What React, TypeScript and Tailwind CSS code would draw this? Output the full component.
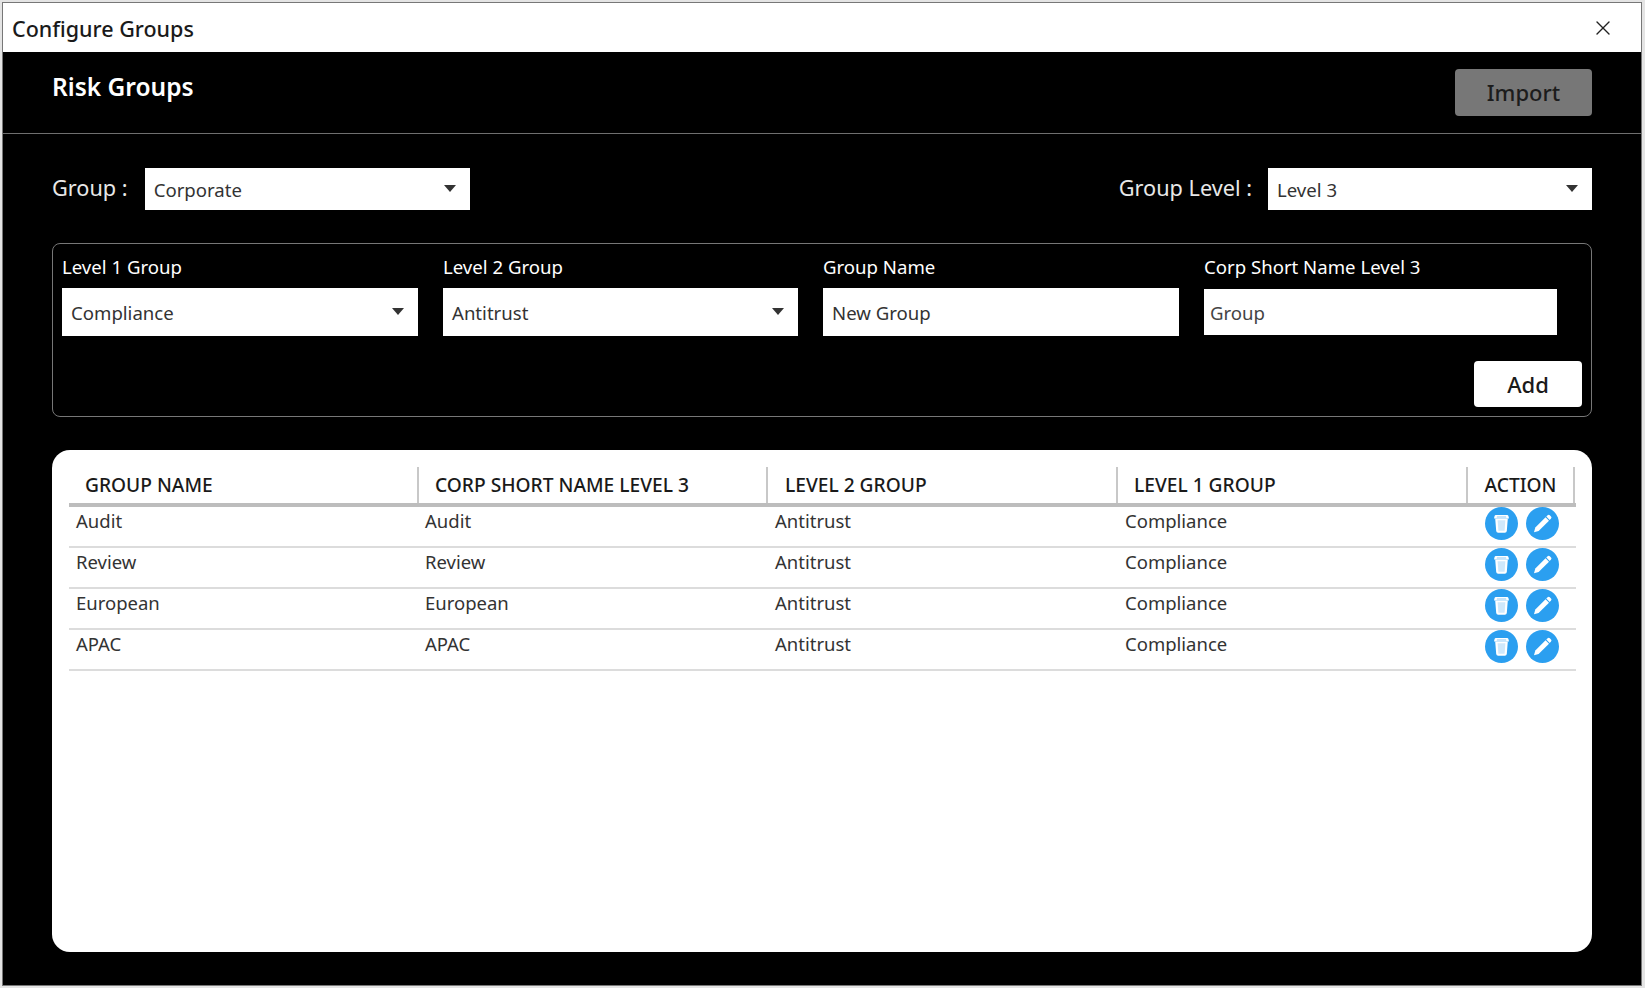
import React from 'react';
import { X } from 'lucide-react';

const font = 'font-["Noto_Sans","Open_Sans",sans-serif]';

const rows = [
  { name: 'Audit', short: 'Audit' },
  { name: 'Review', short: 'Review' },
  { name: 'European', short: 'European' },
  { name: 'APAC', short: 'APAC' },
];

const headers = [
  { label: 'GROUP NAME', pad: 'pl-[16px]' },
  { label: 'CORP SHORT NAME LEVEL 3', pad: 'pl-[16px]' },
  { label: 'LEVEL 2 GROUP', pad: 'pl-[17px]' },
  { label: 'LEVEL 1 GROUP', pad: 'pl-[16px]' },
];

const Caret = () => (
  <svg width="12" height="7" viewBox="0 0 12 7" className="-mt-[1px] shrink-0">
    <path d="M0 0h12L6 7z" fill="#333" />
  </svg>
);

const Select: React.FC<{ value: string; className?: string }> = ({ value, className = '' }) => (
  <div className={`flex items-center justify-between bg-white pl-[9px] pr-[14px] text-[18.6px] text-[#333] ${className}`}>
    <span className="pt-[1px]">{value}</span>
    <Caret />
  </div>
);

const Field: React.FC<{ label: string; children: React.ReactNode }> = ({ label, children }) => (
  <div className="flex flex-col">
    <label className="mb-[8px] h-[26px] text-[18.6px] leading-[26px] text-white">{label}</label>
    {children}
  </div>
);

const TrashIcon = () => (
  <svg width="33" height="33" viewBox="0 0 33 33">
    <circle cx="16.5" cy="16.5" r="16.5" fill="#2b9ff0" />
    <path d="M11 8h11a1.500 1.500 0 0 1 1.500 1.200l.5 2.300H9l.5-2.300A1.500 1.500 0 0 1 11 8z" fill="#fff" />
    <path d="M12 9.600h9l.4.900h-9.800z" fill="#8fcaf6" />
    <path d="M10.200 11.500h12.600l-1 12.500a2 2 0 0 1-2 1.700h-6.600a2 2 0 0 1-2-1.700z" fill="#fff" />
    <path d="M12.600 13.200h7.800l-.8 10.500h-6.200z" fill="#cfe8fb" />
  </svg>
);

const PencilIcon = () => (
  <svg width="33" height="33" viewBox="0 0 33 33">
    <circle cx="16.5" cy="16.5" r="16.5" fill="#2b9ff0" />
    <path d="M21.600 8.200a1.600 1.600 0 0 1 2.200 0l1.200 1.200a1.600 1.600 0 0 1 0 2.200l-1.300 1.300-3.400-3.400z" fill="#fff" />
    <path d="M19.600 10.300 23 13.700 12.600 23.900 8 25.200 9.300 20.600z" fill="#fff" />
  </svg>
);

const columns = 'grid grid-cols-[350px_349px_350px_350px_107px]';

export default function App() {
  return (
    <div className={`${font} h-[988px] w-[1645px] overflow-hidden bg-[#e4e4e4] pl-[2px] pt-[2px]`}>
      <div className="flex h-[984px] w-[1640px] flex-col border border-[#777] bg-black">
        {/* title bar */}
        <div className="flex h-[49px] shrink-0 items-center justify-between bg-white pl-[9px] pr-[26px]">
          <span className="mt-[3px] text-[21.5px] font-medium text-[#1a1a1a]">Configure Groups</span>
          <X className="h-[24px] w-[24px] text-[#222]" strokeWidth={1.4} />
        </div>

        {/* heading */}
        <div className="flex h-[82px] shrink-0 items-center justify-between border-b border-[#6f6f6f] pl-[49px] pr-[49px]">
          <h1 className="-mt-[10px] text-[24.500px] font-semibold text-white">Risk Groups</h1>
          <button className="h-[47px] w-[137px] rounded-[4px] bg-[#777] text-[22px] font-medium text-[#1c1c1c]">Import</button>
        </div>

        <div className="flex flex-1 flex-col pl-[49px] pr-[49px]">
          {/* group pickers */}
          <div className="mt-[34px] flex h-[42px] items-center justify-between">
            <div className="flex items-center gap-[17px]">
              <span className="-mt-[1px] text-[21.700px] text-[#e8e8e8]">Group :</span>
              <Select value="Corporate" className="h-[42px] w-[325px]" />
            </div>
            <div className="flex items-center gap-[16px]">
              <span className="-mt-[1px] text-[21.700px] text-[#e8e8e8]">Group Level :</span>
              <Select value="Level 3" className="h-[42px] w-[324px]" />
            </div>
          </div>

          {/* add form */}
          <div className="mt-[33px] flex h-[174px] flex-col rounded-[8px] border border-[#777] pl-[9px] pr-[9px] pt-[10px]">
            <div className="flex">
              <div className="w-[356px]">
                <Field label="Level 1 Group"><Select value="Compliance" className="h-[48px]" /></Field>
              </div>
              <div className="ml-[25px] w-[355px]">
                <Field label="Level 2 Group"><Select value="Antitrust" className="h-[48px]" /></Field>
              </div>
              <div className="ml-[25px] w-[356px]">
                <Field label="Group Name">
                  <div className="flex h-[48px] items-center bg-white pl-[9px] pt-[1px] text-[18.6px] text-[#333]">New Group</div>
                </Field>
              </div>
              <div className="ml-[25px] w-[353px]">
                <Field label="Corp Short Name Level 3">
                  <div className="mt-[1px] flex h-[46px] items-center bg-white pl-[6px] pt-[1px] text-[18.6px] text-[#444]">Group</div>
                </Field>
              </div>
            </div>
            <div className="mt-[25px] flex justify-end">
              <button className="h-[46px] w-[108px] rounded-[4px] bg-white text-[22px] font-medium text-[#1a1a1a]">Add</button>
            </div>
          </div>

          {/* table */}
          <div className="mt-[33px] h-[502px] rounded-[18px] bg-white pl-[17px] pr-[16px] pt-[16px]">
            <div className={`${columns} h-[41px] border-b-[4px] border-[#bdbdbd] pt-[1px] text-[19.2px] font-medium text-[#1a1a1a]`}>
              {headers.map(h => (
                <div key={h.label} className={`flex items-center border-r-2 border-[#c8c8c8] ${h.pad}`}>{h.label}</div>
              ))}
              <div className="flex items-center justify-center border-r-2 border-[#c8c8c8]">ACTION</div>
            </div>
            {rows.map(r => (
              <div key={r.name} className={`${columns} h-[41px] border-b-2 border-[#dcdcdc] text-[18.5px] text-[#333]`}>
                <div className="pl-[7px] leading-[28px]">{r.name}</div>
                <div className="pl-[6px] leading-[28px]">{r.short}</div>
                <div className="pl-[7px] leading-[28px]">Antitrust</div>
                <div className="pl-[7px] leading-[28px]">Compliance</div>
                <div className="flex items-start gap-[8px] pl-[17px]">
                  <TrashIcon />
                  <PencilIcon />
                </div>
              </div>
            ))}
          </div>
        </div>
      </div>
    </div>
  );
}
